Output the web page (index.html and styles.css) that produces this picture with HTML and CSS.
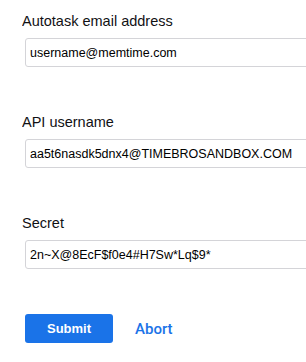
FILE: index.html
```html
<!DOCTYPE html>
<html lang="en">
<head>
  <meta charset="UTF-8" />
  <meta name="viewport" content="width=device-width, initial-scale=1.0"/>
  <title>Autotask connection</title>
  <link rel="stylesheet" href="styles.css">
</head>
<body>
  <form class="connect-form">
    <div class="field">
      <label for="email">Autotask email address</label>
      <input type="text" id="email" value="username@memtime.com" />
    </div>
    <div class="field">
      <label for="apiUser">API username</label>
      <input type="text" id="apiUser" value="aa5t6nasdk5dnx4@TIMEBROSANDBOX.COM" />
    </div>
    <div class="field">
      <label for="secret">Secret</label>
      <input type="text" id="secret" value="2n~X@8EcF$f0e4#H7Sw*Lq$9*" />
    </div>
    <div class="actions">
      <button type="button" class="submit">Submit</button>
      <a href="#" class="abort">Abort</a>
    </div>
  </form>
</body>
</html>
```

FILE: styles.css
```css
html, body {
  margin: 0;
  overflow: hidden;
}
body {
  font-family: "Liberation Sans", Arial, sans-serif;
  background: #fff;
  color: #111114;
  padding: 11px 0 0 22px;
}
.connect-form {
  overflow: hidden;
}
.field {
  display: flex;
  flex-direction: column;
  gap: 7px;
  margin-bottom: 45px;
}
.field label {
  font-size: 14.5px;
  line-height: 20px;
}
.field input {
  box-sizing: border-box;
  margin-left: 3px;
  width: calc(100% + 10px);
  height: 29px;
  padding: 0 4px;
  border: 1px solid #d4d4d8;
  border-radius: 3px;
  font-family: inherit;
  font-size: 12.5px;
  color: #000;
  outline: none;
}
.actions {
  display: flex;
  align-items: center;
  gap: 22px;
  margin-top: 3px;
  margin-left: 3px;
}
.submit {
  width: 88px;
  height: 29px;
  border: none;
  border-radius: 3px;
  background: #1a73e8;
  color: #fff;
  font-family: inherit;
  font-size: 13px;
  font-weight: bold;
  cursor: pointer;
}
.abort {
  color: #1a73e8;
  font-family: Roboto, "Liberation Sans", sans-serif;
  font-size: 15px;
  font-weight: 500;
  text-decoration: none;
}
```
